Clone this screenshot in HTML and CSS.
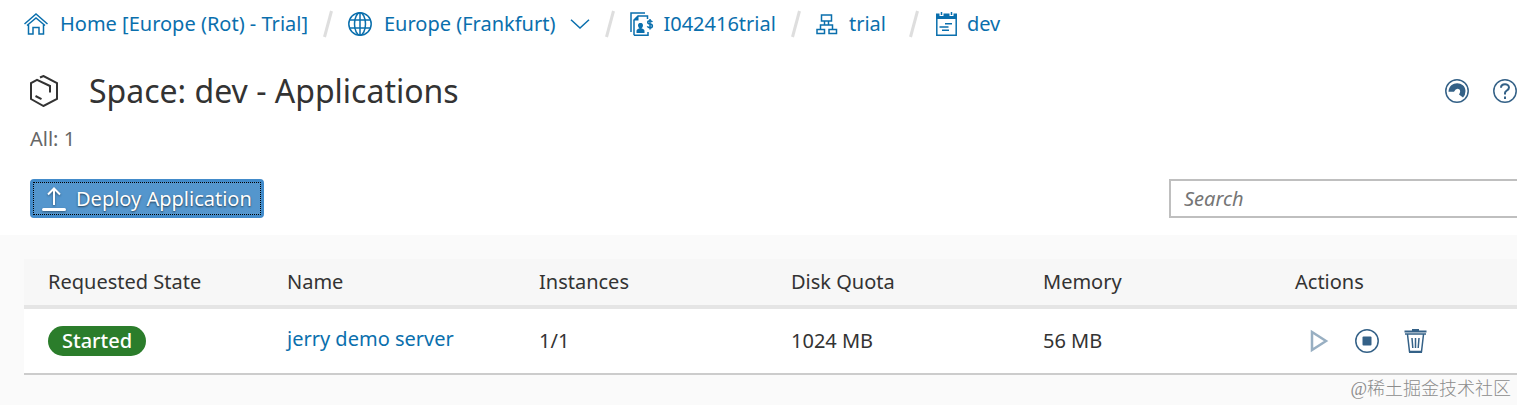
FILE: index.html
```html
<!DOCTYPE html>
<html lang="en">
<head>
  <meta charset="UTF-8">
  <title>Space: dev - Applications</title>
  <link rel="stylesheet" href="styles.css">
</head>
<body>

  <nav class="breadcrumb" aria-label="Breadcrumb">
    <a class="crumb" href="#">
      <svg class="icon" viewBox="0 0 24 24"><path d="M.500 12 12 2l11.500 10M3 13.500 12 6l9 7.500M4.500 12.500V22H9v-6.500h6V22h4.500v-9.500"/></svg>
      Home [Europe (Rot) - Trial]
    </a>
    <svg class="slash" viewBox="0 0 10 28"><path d="M1.500 27 8.500 1"/></svg>
    <a class="crumb" href="#">
      <svg class="icon" viewBox="0 0 24 24"><circle cx="12" cy="12" r="11.200"/><ellipse cx="12" cy="12" rx="5.500" ry="11.200"/><path d="M12 1v22M2 8h20M2 16h20"/></svg>
      Europe (Frankfurt)
    </a>
    <button class="region-toggle" type="button" aria-label="Change region">
      <svg viewBox="0 0 20 10"><path d="m1 .700 9 8.300 9-8.300"/></svg>
    </button>
    <svg class="slash" viewBox="0 0 10 28"><path d="M1.500 27 8.500 1"/></svg>
    <a class="crumb crumb-tight" href="#">
      <svg class="icon" viewBox="0 0 24 24"><path d="M1 20V1h14M4 23.300V8l4-4h9.500v3M4 23.300h14V20"/><path class="solid" d="M3.500 8.500 8.500 3.500v5zM6.500 21v-2q0-2 3-2.500Q8 15 8 13.500C8 11.500 9.200 11 10.500 11s2.500.500 2.500 2.500q0 1.500-1.500 3 3 .500 3 2.500v2z"/><path d="M22.300 10q-.800-1.300-2.300-1.300c-3 0-3 3 0 3.300 3.200.300 3.200 3.800 0 3.800q-2 0-2.600-1.500M20 7v10.500"/></svg>
      I042416trial
    </a>
    <svg class="slash" viewBox="0 0 10 28"><path d="M1.500 27 8.500 1"/></svg>
    <a class="crumb crumb-tight crumb-short" href="#">
      <svg class="icon" viewBox="0 0 24 24"><path d="M5.500 3h10v6h-10zM8.500 9v3.500M12.500 9v3.500M4.500 17.500V13h12v4.500M1 17.500h7.500v4H1zM13 17.500h7.500v4H13z"/></svg>
      trial
    </a>
    <svg class="slash" viewBox="0 0 10 28"><path d="M1.500 27 8.500 1"/></svg>
    <a class="crumb crumb-tight" href="#">
      <svg class="icon" viewBox="0 0 24 24"><path d="M2.800 6v17.200h19.400V6M11 11.800h7M5.500 15h9M8 18.200h7"/><path class="solid" d="M2 1.500h3.500V4h4V1.500h6V4h4V1.500H23V7H2z"/><path d="M7.500 0v3M17.500 0v3"/></svg>
      dev
    </a>
  </nav>

  <header class="page-header">
    <svg class="space-icon" viewBox="0 0 28 32"><path d="M10 2.500 13.500 1 27 8v16l-13.500 7L1 24V8l6-3.200 13 6.200v6.500M5.500 21l6 3.200"/></svg>
    <h1>Space: dev - Applications</h1>
    <div class="header-actions">
      <button class="icon-button" type="button" aria-label="Refresh">
        <svg class="icon" viewBox="0 0 24 24"><circle cx="12" cy="12" r="11.200"/><path class="solid" d="M3.500 12.800C4 1 20.500 2 20.500 12q0 4-2.500 6.500l-4-3q2-3 .500-5-3-2.500-5.500 2.300z"/></svg>
      </button>
      <button class="icon-button" type="button" aria-label="Help">
        <svg class="icon" viewBox="0 0 24 24"><circle cx="12" cy="12" r="11.200"/><path class="thick" d="M8 8.700c0-4.600 8-4.600 8-.200 0 3-4 3-4 5.500V15.500M12 17.500V20"/></svg>
      </button>
    </div>
  </header>

  <p class="count">All: 1</p>

  <div class="toolbar">
    <button class="deploy" type="button">
      <svg class="icon" viewBox="0 0 24 26"><path d="M12 19V3M6 8.500 12 2.500l6 6"/><path class="base" d="M1.500 23.500h21"/></svg>
      Deploy Application
    </button>
    <input class="search" type="search" placeholder="Search" aria-label="Search">
  </div>

  <main class="content">
    <table class="apps">
      <colgroup>
        <col class="col-state">
        <col class="col-data" span="4">
        <col>
      </colgroup>
      <thead>
        <tr>
          <th>Requested State</th>
          <th>Name</th>
          <th>Instances</th>
          <th>Disk Quota</th>
          <th>Memory</th>
          <th>Actions</th>
        </tr>
      </thead>
      <tbody>
        <tr>
          <td><span class="badge">Started</span></td>
          <td class="app-name"><a href="#">jerry demo server</a></td>
          <td>1/1</td>
          <td>1024 MB</td>
          <td>56 MB</td>
          <td>
            <div class="actions">
              <button class="icon-button" type="button" aria-label="Start" disabled>
                <svg class="icon" viewBox="0 0 24 24"><path class="play" d="M5 3v18l14-9z"/></svg>
              </button>
              <button class="icon-button" type="button" aria-label="Stop">
                <svg class="icon" viewBox="0 0 24 24"><circle cx="12" cy="12" r="11.200"/><rect class="solid" x="7.500" y="7.500" width="9" height="9" rx="1"/></svg>
              </button>
              <button class="icon-button" type="button" aria-label="Delete">
                <svg class="icon" viewBox="0 0 24 24"><path class="thick" d="M1.500 2.500h22M9 1h7"/><path d="M2 5h21M4.500 5.500l2 17h12l2-17M9 9l.800 10M12.500 9v10M16 9l-.800 10"/><path class="thick" d="M6 23h13"/></svg>
              </button>
            </div>
          </td>
        </tr>
      </tbody>
    </table>
    <span class="watermark" lang="zh">@稀土掘金技术社区</span>
  </main>

</body>
</html>
```
FILE: styles.css
```css
* {
  box-sizing: border-box;
}
body {
  margin: 0;
  min-height: 100vh;
  display: flex;
  flex-direction: column;
  background-color: #fff;
  color: #333;
  font-family: "Noto Sans", "Open Sans", sans-serif;
  font-size: 20px;
  line-height: 28px;
}
a {
  color: #0a6fad;
  text-decoration: none;
}
a:hover {
  text-decoration: underline;
}
button,
input {
  font: inherit;
}
svg {
  display: block;
  flex: none;
  fill: none;
  stroke: currentColor;
  stroke-width: 1.5;
}
.icon {
  width: 24px;
  height: 24px;
}
.solid {
  fill: currentColor;
  stroke: none;
}
.thick {
  stroke-width: 2;
}

.breadcrumb {
  display: flex;
  align-items: center;
  gap: 15px;
  height: 48px;
  padding-left: 24px;
  white-space: nowrap;
}
.crumb {
  display: flex;
  align-items: center;
  gap: 12px;
}
.crumb-tight {
  gap: 9px;
}
.crumb-short {
  min-width: 78px;
}
.slash {
  width: 10px;
  height: 28px;
  color: #dedede;
  stroke-width: 3;
}
.region-toggle {
  padding: 0;
  border: none;
  background: none;
  color: #0a6fad;
}
.region-toggle svg {
  width: 20px;
  height: 10px;
}

.page-header {
  display: flex;
  align-items: center;
  height: 86px;
  padding-left: 30px;
}
.space-icon {
  width: 28px;
  height: 32px;
  stroke-width: 2;
}
h1 {
  margin: 0 0 0 31px;
  font-size: 32px;
  line-height: 40px;
  font-weight: normal;
}
.header-actions {
  display: flex;
  gap: 24px;
  margin-left: auto;
}
.icon-button {
  padding: 0;
  border: none;
  background: none;
  color: #346187;
  cursor: pointer;
}
.icon-button:disabled {
  opacity: 0.5;
  cursor: default;
}
.play {
  stroke-width: 2.5;
}

.count {
  margin: -9px 0 0 30px;
  color: #666;
}

.toolbar {
  display: flex;
  justify-content: space-between;
  align-items: center;
  padding: 26px 0 17px 30px;
}
.deploy {
  display: flex;
  align-items: center;
  gap: 10px;
  height: 39px;
  padding: 0 9px;
  border: 3px solid #428bca;
  border-radius: 4px;
  outline: 1px dotted #000;
  outline-offset: -4px;
  background-color: #5496cd;
  color: #fff;
  text-shadow: 0 1px 2px rgba(0, 0, 0, 0.6);
  cursor: pointer;
}
.deploy .icon {
  height: 26px;
  stroke-width: 2;
  filter: drop-shadow(0 1px 1px rgba(0, 0, 0, 0.4));
}
.deploy .base {
  stroke-width: 3;
  stroke-linecap: round;
}
.search {
  width: 348px;
  height: 39px;
  padding: 0 13px;
  border: 2px solid #bfbfbf;
  border-right: none;
  border-radius: 0;
  outline: none;
  appearance: none;
}
.search::placeholder {
  color: #757575;
  font-style: italic;
}

.content {
  position: relative;
  flex: 1;
  padding: 24px 0 30px 24px;
  background-color: #fafafa;
}
.apps {
  width: 100%;
  table-layout: fixed;
  border-spacing: 0;
}
.col-state {
  width: 239px;
}
.col-data {
  width: 252px;
}
.apps th,
.apps td {
  padding: 0 24px;
  text-align: left;
  font-weight: normal;
  white-space: nowrap;
}
.apps th {
  height: 50px;
  border-bottom: 4px solid #e5e5e5;
  background-color: #f7f7f7;
}
.apps td {
  height: 66px;
  border-bottom: 2px solid #ccc;
  background-color: #fff;
}
.apps .app-name {
  padding-bottom: 5px;
}
.badge {
  display: inline-block;
  padding: 0 14px;
  border-radius: 15px;
  background-color: #2b7d2b;
  color: #fff;
  font-weight: 500;
  line-height: 30px;
}
.actions {
  display: flex;
  gap: 24px;
  padding-left: 12px;
}

.watermark {
  position: absolute;
  right: 6px;
  bottom: 2px;
  color: #8c8c8c;
  font-family: "Liberation Serif", "Noto Sans CJK SC", sans-serif;
  font-size: 18px;
  font-weight: 300;
}
```
